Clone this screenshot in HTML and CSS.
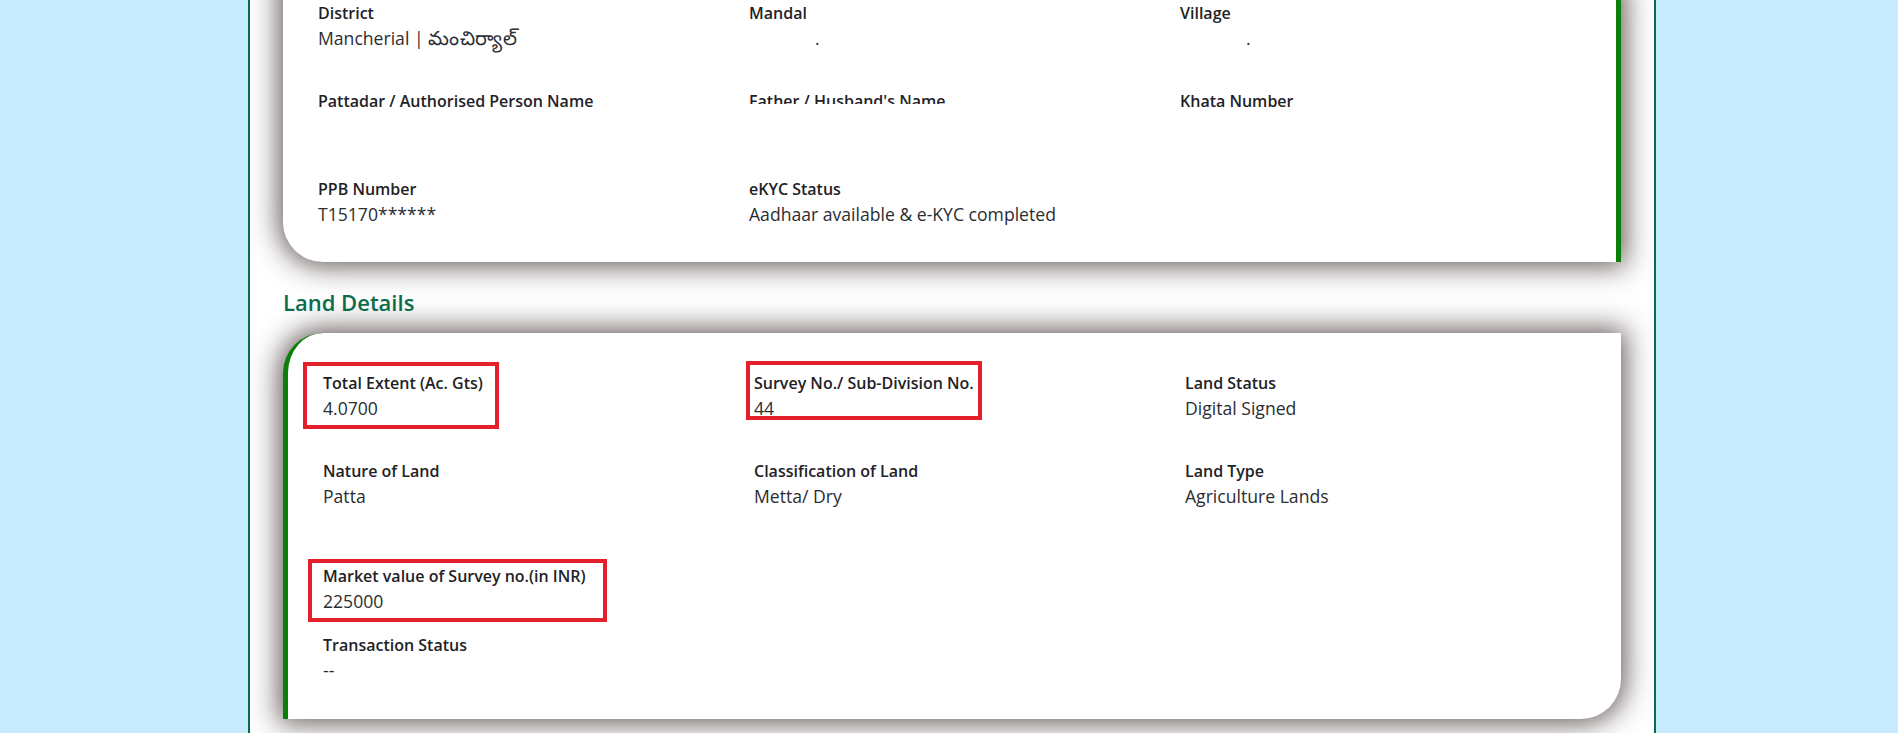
FILE: index.html
```html
<!DOCTYPE html>
<html lang="en">
<head>
<meta charset="utf-8">
<title>Pattadar and Land Details</title>
<link rel="stylesheet" href="styles.css">
</head>
<body>
<div class="page">
  <section class="card card-owner">
    <div class="grid">
      <div class="field">
        <div class="label">District</div>
        <div class="value">Mancherial | <span class="te">మంచిర్యాల్</span></div>
      </div>
      <div class="field">
        <div class="label">Mandal</div>
        <div class="value value-hidden">.</div>
      </div>
      <div class="field">
        <div class="label">Village</div>
        <div class="value value-hidden">.</div>
      </div>
      <div class="field">
        <div class="label">Pattadar / Authorised Person Name</div>
        <div class="value"></div>
      </div>
      <div class="field">
        <div class="label label-clipped">Father / Husband's Name</div>
        <div class="value"></div>
      </div>
      <div class="field">
        <div class="label">Khata Number</div>
        <div class="value"></div>
      </div>
      <div class="field">
        <div class="label">PPB Number</div>
        <div class="value">T15170******</div>
      </div>
      <div class="field">
        <div class="label">eKYC Status</div>
        <div class="value">Aadhaar available &amp; e-KYC completed</div>
      </div>
      <div class="field">
        <div class="label"></div>
        <div class="value"></div>
      </div>
    </div>
  </section>

  <h2 class="section-title">Land Details</h2>

  <section class="card card-land">
    <div class="grid">
      <div class="field">
        <span class="mark mark-extent"></span>
        <div class="label">Total Extent (Ac. Gts)</div>
        <div class="value">4.0700</div>
      </div>
      <div class="field">
        <span class="mark mark-survey"></span>
        <div class="label">Survey No./ Sub-Division No.</div>
        <div class="value">44</div>
      </div>
      <div class="field">
        <div class="label">Land Status</div>
        <div class="value">Digital Signed</div>
      </div>
      <div class="field">
        <div class="label">Nature of Land</div>
        <div class="value">Patta</div>
      </div>
      <div class="field">
        <div class="label">Classification of Land</div>
        <div class="value">Metta/ Dry</div>
      </div>
      <div class="field">
        <div class="label">Land Type</div>
        <div class="value">Agriculture Lands</div>
      </div>
    </div>
    <div class="grid grid-market">
      <div class="field">
        <span class="mark mark-market"></span>
        <div class="label">Market value of Survey no.(in INR)</div>
        <div class="value">225000</div>
      </div>
    </div>
    <div class="grid grid-transaction">
      <div class="field">
        <div class="label">Transaction Status</div>
        <div class="value">--</div>
      </div>
    </div>
  </section>
</div>
</body>
</html>
```

FILE: styles.css
```css
html, body {
  margin: 0;
  padding: 0;
  overflow: hidden;
}

body {
  background: #c6ecfd;
  font-family: "Open Sans", "Noto Sans", "DejaVu Sans", sans-serif;
  color: #212529;
}

.page {
  width: 1338px;
  margin-left: 248px;
  padding: 0 33px 14px;
  background: #ffffff;
  border-left: 2px solid #0b6b4c;
  border-right: 2px solid #0b6b4c;
}

.card {
  background: #ffffff;
  box-shadow: 0 0 28px 4px rgba(60, 45, 45, 0.8);
}

.card-owner {
  margin-top: -37px;
  padding: 38px 15px 35px 20px;
  border-right: 5px solid #0a800a;
  border-radius: 0 40px 0 40px;
}

.card-land {
  padding: 38px 15px 36px 20px;
  border-left: 5px solid #0a800a;
  border-radius: 40px 0 40px 0;
}

.grid {
  display: grid;
  grid-template-columns: repeat(3, 431px);
  row-gap: 38px;
}

.grid-market {
  margin-top: 55px;
}

.grid-transaction {
  margin-top: 19px;
}

.field {
  position: relative;
  padding: 0 15px;
}

.label {
  font-size: 16px;
  line-height: 24px;
  font-weight: 600;
  height: 24px;
  color: #1f2226;
  white-space: nowrap;
}

.label-clipped {
  clip-path: inset(0 0 9px 0);
}

.value {
  font-size: 17.6px;
  line-height: 26px;
  font-weight: 400;
  height: 26px;
  color: #2a2d31;
  white-space: nowrap;
}

.te {
  font-size: 1.12em;
  letter-spacing: 0.5px;
}

.value-hidden {
  text-indent: 66px;
}

.section-title {
  margin: 27px 0 17.6px;
  font-size: 22px;
  line-height: 26.4px;
  font-weight: 600;
  color: #0b6b4c;
}

.mark {
  position: absolute;
  box-sizing: border-box;
  border: 4px solid #e3202c;
  pointer-events: none;
}

.mark-extent {
  left: -5px;
  top: -9px;
  width: 196px;
  height: 67px;
}

.mark-survey {
  left: 7px;
  top: -10px;
  width: 236px;
  height: 59px;
}

.mark-market {
  left: 0;
  top: -5px;
  width: 299px;
  height: 63px;
}
```
